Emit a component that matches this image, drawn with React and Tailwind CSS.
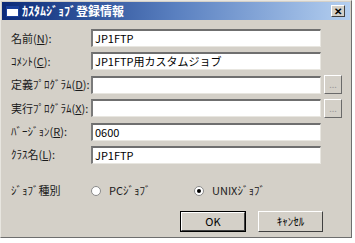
const font = { fontFamily: '"Noto Sans CJK JP", "Liberation Sans", sans-serif' }

function Label({ children, k, rest }) {
  return (
    <span className="w-[80px] text-[11px] text-[#1a1a1a] leading-none">
      {children}(<span className="underline">{k}</span>){rest}
    </span>
  )
}

function Field({ value }) {
  return (
    <div className="w-[230px] h-[18px] bg-white border-t-2 border-l-2 border-t-[#6f6f6f] border-l-[#7a7a7a] border-b border-r border-b-[#e8e6e0] border-r-[#e8e6e0] flex items-center pl-[2px] text-[11px] text-black leading-none">
      {value}
    </div>
  )
}

function Browse() {
  return (
    <div className="ml-[3px] w-[18px] h-[19px] bg-[#d4d0c8] border border-t-white border-l-white border-b-[#6a6a6a] border-r-[#6a6a6a] flex items-center justify-center text-[9px] text-[#9a9a9a] leading-none">
      ...
    </div>
  )
}

function Row({ label, k, rest = ':', value = '', browse }) {
  return (
    <div className="flex items-center h-[18px]">
      <Label k={k} rest={rest}>{label}</Label>
      <Field value={value} />
      {browse && <Browse />}
    </div>
  )
}

function Radio({ checked }) {
  return (
    <div className="w-[10px] h-[10px] rounded-full bg-white border border-[#8a8a8a] flex items-center justify-center">
      {checked && <div className="w-[4px] h-[4px] rounded-full bg-black" />}
    </div>
  )
}

export default function App() {
  return (
    <div className="w-[355px] h-[243px] bg-white" style={font}>
      <div className="w-[352px] h-[238px] bg-[#d4d0c8] border border-t-[#e8e6e0] border-l-[#e8e6e0] border-r-[#6e6e6e] border-b-[#6e6e6e] flex flex-col">
        <div className="h-[18px] mx-[1px] mt-[1px] flex items-center bg-gradient-to-r from-[#0c2a78] via-[#5a80c0] to-[#b4cff0] pl-[4px] pr-[5px]">
          <div className="w-[13px] h-[11px] bg-white border-t-[3px] border-[#1a3f9a] border-x border-b mr-[3px]" />
          <span className="text-[12px] font-bold text-white leading-none">ｶｽﾀﾑｼﾞｮﾌﾞ登録情報</span>
          <div className="ml-auto w-[14px] h-[12px] bg-[#d4d0c8] border border-t-white border-l-white border-b-[#404040] border-r-[#404040] flex items-center justify-center text-[10px] font-bold leading-none text-black">
            ✕
          </div>
        </div>
        <div className="flex flex-col gap-[5.4px] pl-[10px] pt-[9px]">
          <Row label="名前" k="N" value="JP1FTP" />
          <Row label="ｺﾒﾝﾄ" k="C" value="JP1FTP用カスタムジョブ" />
          <Row label="定義ﾌﾟﾛｸﾞﾗﾑ" k="D" browse />
          <Row label="実行ﾌﾟﾛｸﾞﾗﾑ" k="X" browse />
          <Row label="ﾊﾞｰｼﾞｮﾝ" k="R" value="0600" />
          <Row label="ｸﾗｽ名" k="L" value="JP1FTP" />
        </div>
        <div className="flex items-center pl-[10px] mt-[20px] h-[14px] text-[11px] leading-none text-[#1a1a1a]">
          <span className="w-[80px]">ｼﾞｮﾌﾞ種別</span>
          <Radio />
          <span className="ml-[8px] w-[85px]">PCｼﾞｮﾌﾞ</span>
          <Radio checked />
          <span className="ml-[8px]">UNIXｼﾞｮﾌﾞ</span>
        </div>
        <div className="flex justify-end gap-[12px] pr-[28px] mt-[13px]">
          <div className="w-[66px] h-[21px] border border-black flex">
            <div className="flex-1 border border-t-white border-l-white border-b-[#404040] border-r-[#404040] flex items-center justify-center text-[11px] leading-none text-black">
              OK
            </div>
          </div>
          <div className="w-[65px] h-[21px] border border-t-white border-l-white border-b-[#404040] border-r-[#404040] flex items-center justify-center text-[11px] leading-none text-black">
            ｷｬﾝｾﾙ
          </div>
        </div>
      </div>
    </div>
  )
}
